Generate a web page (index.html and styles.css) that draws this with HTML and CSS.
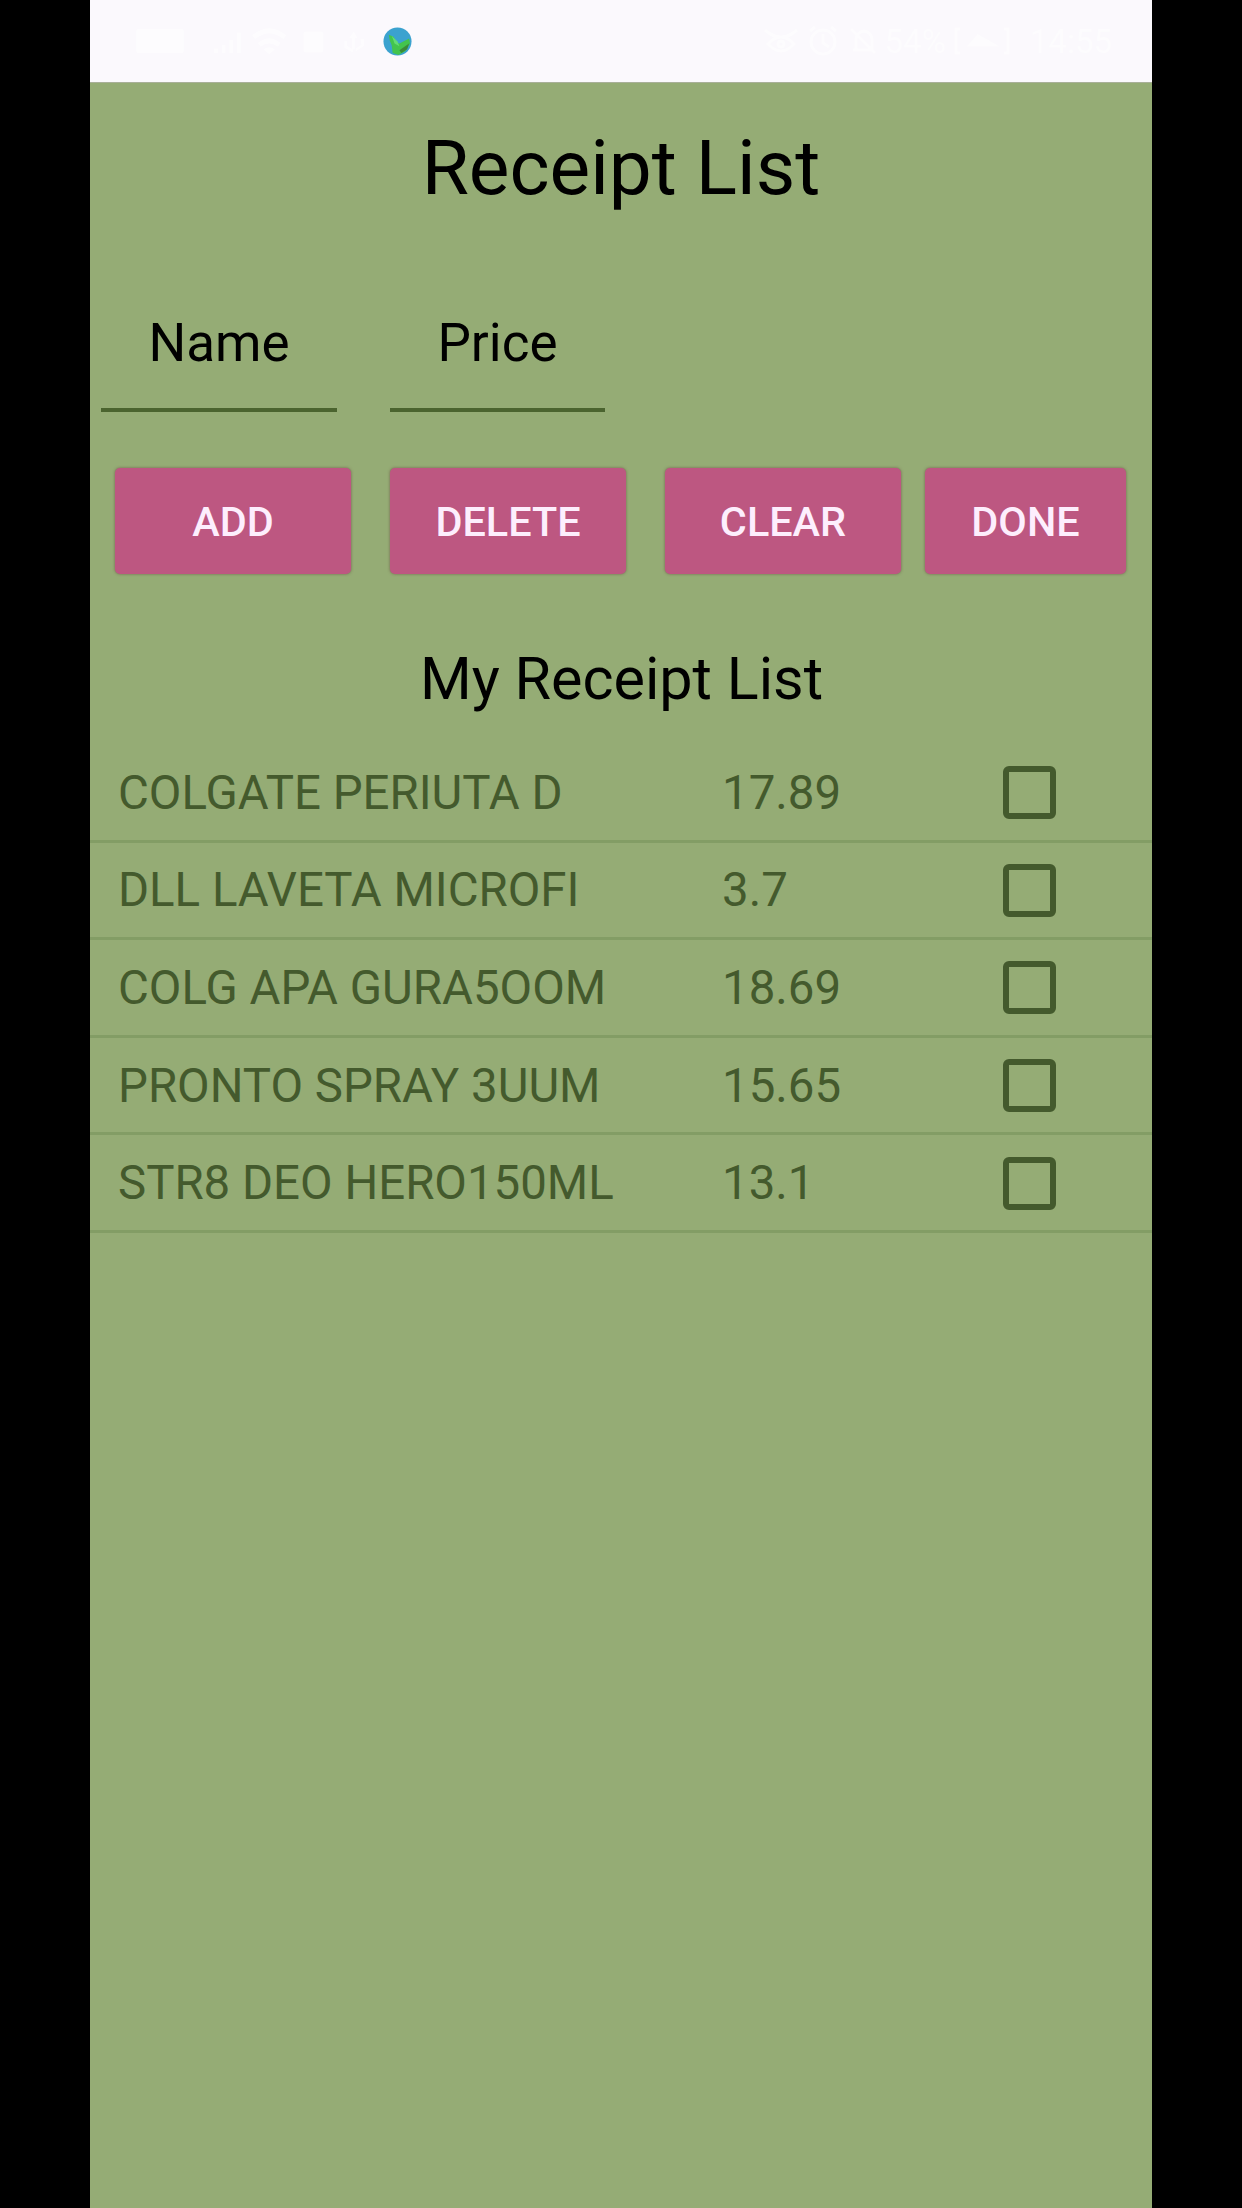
FILE: index.html
```html
<!DOCTYPE html>
<html lang="en">
<head>
<meta charset="utf-8">
<title>Receipt List</title>
<link rel="stylesheet" href="styles.css">
</head>
<body>
<main class="screen">
  <header class="status">
    <div class="status-group">
      <svg class="status-left faint" viewBox="0 0 250 40" fill="#fff">
        <rect x="0" y="7" width="50" height="26" rx="3"/>
        <path d="M82 33v-5h4v5zM90 33v-9h4v9zM98 33v-14h4v14zM106 33v-22h4v22z"/>
        <path d="M122 14q18-15 36 0l-3 4q-15-12-30 0zM128 22q12-10 24 0l-3 4q-9-7-18 0zM134 29q6-5 12 0l-6 5z"/>
        <rect x="176" y="10" width="21" height="22" rx="3"/>
        <path d="M229 10l4 7h-3v12h-3v-12h-3zM219 20h3v5l6 4v3l-9-5zM236 18h4v7l-9 6v-3l6-4z"/>
      </svg>
      <svg class="globe" viewBox="0 0 30 30">
        <circle cx="15" cy="15" r="14.5" fill="#3ba2cf"/>
        <path d="M6 8l5 2 3 6 3 1 10-5 1 5-5 8-7 4-6-2-1-8-2-5z" fill="#43c44d"/>
        <path d="M17 24l10-7-2 6-6 4z" fill="#3c8a37"/>
        <path d="M9 9l6 6 2 5-5-3z" fill="#62dc75"/>
      </svg>
    </div>
    <div class="status-group faint">
      <svg class="status-icons" viewBox="0 0 114 32" fill="none" stroke="#fff" stroke-width="3">
        <path d="M2 5q16 14 32 0M5 19q13-14 26 0-13 14-26 0z"/><circle cx="18" cy="19" r="3"/>
        <circle cx="60" cy="17" r="12"/><path d="M60 9v9l6 4M47 6l5-4M73 6l-5-4"/>
        <path d="M90 25h20M93 25V14q1-7 8-8 7 1 8 8v11M88 4l24 24"/>
      </svg>
      <span>54%</span>
      <svg class="battery" viewBox="0 0 56 28" fill="none" stroke="#fff" stroke-width="3"><path d="M6 2H2v24h4M50 2h4v24h-4"/><path d="M16 18l8-9 16 9z" fill="#fff"/></svg>
      <span class="clock">14:55</span>
    </div>
  </header>
  <h1 class="title">Receipt List</h1>
  <div class="fields">
    <div class="field name">Name</div>
    <div class="field price">Price</div>
  </div>
  <div class="actions">
    <button class="btn">ADD</button>
    <button class="btn">DELETE</button>
    <button class="btn">CLEAR</button>
    <button class="btn done">DONE</button>
  </div>
  <h2 class="subtitle">My Receipt List</h2>
  <ul class="list">
    <li class="row"><span>COLGATE PERIUTA D</span><span>17.89</span><span class="check"></span></li>
    <li class="row"><span>DLL LAVETA MICROFI</span><span>3.7</span><span class="check"></span></li>
    <li class="row"><span>COLG APA GURA5OOM</span><span>18.69</span><span class="check"></span></li>
    <li class="row"><span>PRONTO SPRAY 3UUM</span><span>15.65</span><span class="check"></span></li>
    <li class="row"><span>STR8 DEO HERO150ML</span><span>13.1</span><span class="check"></span></li>
  </ul>
</main>
</body>
</html>
```
FILE: styles.css
```css
* { box-sizing: border-box; margin: 0; padding: 0; }
body { background: #000; font-family: Roboto, "Liberation Sans", sans-serif; }
.screen { width: 1062px; height: 2208px; margin-left: 90px; background: #95ac75; overflow: hidden; }
.status { display: flex; justify-content: space-between; align-items: center; height: 83px; padding: 0 40px 0 45px; background: #fbf9fd; border-bottom: 1px solid #a9b099; color: #fff; font-size: 33px; }
.status-group { display: flex; align-items: center; gap: 8px; }
.faint { opacity: .6; }
.status-left { width: 240px; height: 38px; }
.globe { width: 29px; height: 29px; }
.status-icons { width: 114px; height: 32px; }
.battery { width: 56px; height: 28px; }
.clock { margin-left: 12px; }
.title { margin-top: 44px; line-height: 82px; font-size: 76.6px; font-weight: 400; text-align: center; }
.fields { display: flex; gap: 53px; margin-top: 95px; padding-left: 11px; }
.field { height: 108px; padding-top: 9px; border-bottom: 4px solid #4b642f; font-size: 53px; line-height: 60px; text-align: center; }
.name { width: 236px; }
.price { width: 215px; }
.actions { display: flex; margin-top: 56px; padding-left: 25px; gap: 39px; }
.btn { width: 236px; height: 106px; padding-top: 2px; border: 0; border-radius: 5px; background: #bd5781; color: #fdeefd; font: 500 41.4px/104px Roboto, sans-serif; box-shadow: 0 0 3px rgba(90, 50, 50, .6); }
.done { width: 201px; margin-left: -15px; }
.subtitle { margin-top: 70px; padding-left: 1px; line-height: 70px; font-size: 59.3px; font-weight: 400; text-align: center; }
.list { margin-top: 31px; list-style: none; }
.row { display: grid; grid-template-columns: 604px 281px 53px; align-items: center; height: 97.6px; padding: 1px 0 0 28px; border-bottom: 3px solid #839d65; color: #445a2d; font-size: 47.4px; }
.check { width: 53px; height: 53px; border: 6px solid #445a2d; border-radius: 6px; }
```
